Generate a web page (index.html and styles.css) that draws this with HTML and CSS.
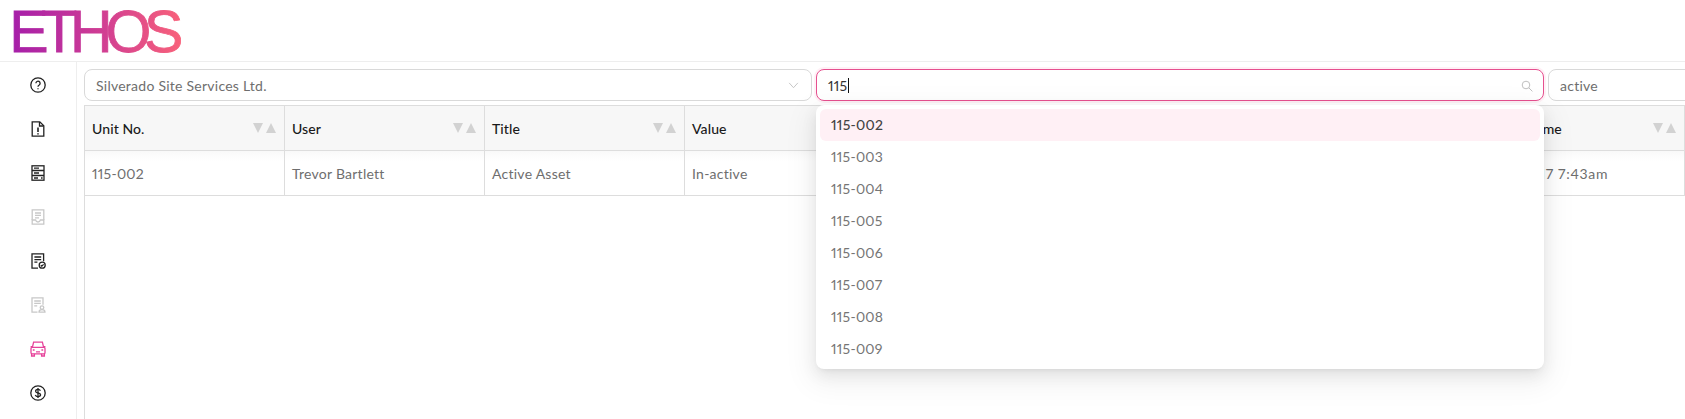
FILE: index.html
```html
<!DOCTYPE html>
<html lang="en">
<head>
<meta charset="utf-8">
<title>Ethos</title>
<link rel="stylesheet" href="styles.css">
</head>
<body>
<div class="page">
  <header class="topbar">
    <svg class="logo" viewBox="0 0 190 61" width="190" height="61">
      <defs>
        <linearGradient id="logoGrad" gradientUnits="userSpaceOnUse" x1="13" y1="0" x2="181" y2="0">
          <stop offset="0" stop-color="#a61fa9"/>
          <stop offset=".55" stop-color="#d23f92"/>
          <stop offset="1" stop-color="#f8617a"/>
        </linearGradient>
      </defs>
      <text class="logo-text" x="9.3" y="52">ETHOS</text>
    </svg>
  </header>
  <div class="shell">
    <nav class="sidebar">
      <a class="nav-item"><svg viewBox="0 0 16 16" class="ico"><circle cx="8" cy="8" r="7.2"/><path d="M5.9 6.2a2.1 2.1 0 1 1 3.3 1.8c-.8.5-1.2.9-1.2 1.8"/><path d="M8 11.3v1"/></svg></a>
      <a class="nav-item"><svg viewBox="0 0 16 16" class="ico"><path d="M2.2.8h7.6l4 4v10.4H2.2z"/><path d="M9.5 1v4h4"/><path d="M8 6.5v4.6M8 12.2v1.4" stroke-width="1.6"/></svg></a>
      <a class="nav-item"><svg viewBox="0 0 16 16" class="ico"><rect x="2" y=".8" width="12" height="14.4"/><path d="M2 5.500h12M2 10.500h12M4 3.200h5M4 8h5M4 13h4M11 13h1.600" /></svg></a>
      <a class="nav-item muted"><svg viewBox="0 0 16 16" class="ico"><path d="M2.2 11V.8h11.6V11"/><path d="M2.2 11v4.2h11.6V11h-3.4c-.4 1.4-1.2 2-2.4 2s-2-.6-2.4-2z"/><path d="M5 4h6M5 6.4h6M5 8.8h4"/></svg></a>
      <a class="nav-item"><svg viewBox="0 0 16 16" class="ico"><path d="M8 15.2H2V.8h11.6v7.4"/><path d="M4.4 4h6.8M4.4 6.6h6.8M4.4 9.2h3"/><circle cx="12.2" cy="12.2" r="3"/><path d="M10.8 12.2l1 1 1.8-1.8"/></svg></a>
      <a class="nav-item muted"><svg viewBox="0 0 16 16" class="ico"><path d="M7.5 15.2H2V.8h11v7"/><path d="M4.2 4h6.6M4.2 6.4h6.6M4.2 8.8h3"/><circle cx="12" cy="10.6" r="1.8"/><path d="M9 15.2c0-1.6 1.2-2.6 3-2.6s3 1 3 2.6z"/></svg></a>
      <a class="nav-item active"><svg viewBox="0 0 18 16" class="ico car"><path d="M3.4 6.400L4.600 1.200h8.800l1.200 5.200"/><path d="M1.600 5.600h2.200M14.200 5.600h2.200"/><rect x="2" y="6.400" width="14" height="6.400" rx="1"/><path d="M2.600 12.800v2.200h2.800v-2.200M12.600 12.800v2.200h2.800v-2.200M7 10.800h4M3.800 9h1.800M12.400 9h1.800"/></svg></a>
      <a class="nav-item"><svg viewBox="0 0 16 16" class="ico"><circle cx="8" cy="8" r="7.2"/><path d="M10.400 5.800C10 4.800 9.100 4.400 8 4.400c-1.400 0-2.400.7-2.400 1.800C5.600 8.800 10.600 7.200 10.600 9.800 10.600 11 9.500 11.600 8 11.600c-1.300 0-2.300-.6-2.700-1.600"/><path d="M8 3v10"/></svg></a>
    </nav>
    <main class="content">
      <div class="filters">
        <div class="field">
          <span class="field-text">Silverado Site Services Ltd.</span>
          <svg viewBox="0 0 12 8" class="chevron"><path d="M1 1l5 5.500L11 1"/></svg>
        </div>
        <div class="field field-focus">
          <span class="field-value">115</span><span class="caret"></span>
          <svg viewBox="0 0 12 12" class="search"><circle cx="5" cy="5" r="3.800"/><path d="M7.800 7.800L11.400 11.400"/></svg>
          <ul class="dropdown">
            <li class="option selected">115-002</li>
            <li class="option">115-003</li>
            <li class="option">115-004</li>
            <li class="option">115-005</li>
            <li class="option">115-006</li>
            <li class="option">115-007</li>
            <li class="option">115-008</li>
            <li class="option">115-009</li>
          </ul>
        </div>
        <div class="field"><span class="field-text">active</span></div>
      </div>
      <div class="table-wrap">
        <table class="grid">
          <thead>
            <tr>
              <th><div class="th-in"><span>Unit No.</span><span class="sort"><i class="down"></i><i class="up"></i></span></div></th>
              <th><div class="th-in"><span>User</span><span class="sort"><i class="down"></i><i class="up"></i></span></div></th>
              <th><div class="th-in"><span>Title</span><span class="sort"><i class="down"></i><i class="up"></i></span></div></th>
              <th><div class="th-in"><span>Value</span><span class="sort"><i class="down"></i><i class="up"></i></span></div></th>
              <th></th>
              <th></th>
              <th></th>
              <th><div class="th-in"><span>Event Time</span><span class="sort"><i class="down"></i><i class="up"></i></span></div></th>
            </tr>
          </thead>
          <tbody>
            <tr>
              <td>115-002</td>
              <td>Trevor Bartlett</td>
              <td>Active Asset</td>
              <td>In-active</td>
              <td></td>
              <td></td>
              <td></td>
              <td class="cell-date">23-05-17 7:43am</td>
            </tr>
          </tbody>
        </table>
      </div>
    </main>
  </div>
</div>
</body>
</html>
```

FILE: styles.css
```css
* { box-sizing: border-box; }
html, body { margin: 0; height: 100%; overflow: hidden; background: #fff; }
body { font-family: Lato, "Open Sans", sans-serif; font-size: 14px; color: #6e6e6e; letter-spacing: .25px; font-variant-numeric: proportional-nums; }
.page { height: 100vh; display: flex; flex-direction: column; overflow: hidden; }

.topbar { height: 62px; flex: none; border-bottom: 1px solid #eee; }
.logo { display: block; }
.logo-text {
  font-family: "Liberation Sans", Arial, sans-serif;
  font-size: 59px;
  letter-spacing: -7.3px;
  fill: url(#logoGrad);
  stroke: url(#logoGrad);
  stroke-width: .8px;
}

.shell { flex: 1; display: flex; min-height: 0; }
.sidebar { width: 77px; flex: none; border-right: 1px solid #eee; padding-top: 1px; display: flex; flex-direction: column; }
.nav-item { height: 44px; display: flex; align-items: center; justify-content: center; color: #222; }
.nav-item.muted { color: #c8c8c8; }
.nav-item.active { color: #e6439a; }
.ico { width: 16px; height: 16px; fill: none; stroke: currentColor; stroke-width: 1.3; }
.ico.car { width: 18px; height: 16px; }

.content { flex: 1; min-width: 0; padding: 7px 0 0 7px; display: flex; flex-direction: column; }
.filters { display: flex; gap: 4px; height: 32px; flex: none; margin-bottom: 4px; }
.field {
  position: relative;
  flex: none;
  width: 728px;
  height: 32px;
  border: 1px solid #d9d9d9;
  border-radius: 8px;
  padding: 0 11px;
  display: flex;
  align-items: center;
  background: #fff;
}
.field-focus { border-color: #e6508f; box-shadow: 0 0 0 2px #fff0f6; }
.field-value { color: #333; }
.caret { width: 1px; height: 15px; background: #111; margin-left: 1px; }
.chevron { position: absolute; right: 12px; top: 12px; width: 11px; height: 7px; fill: none; stroke: #bfbfbf; stroke-width: 1; }
.search { position: absolute; right: 10px; top: 10px; width: 12px; height: 12px; fill: none; stroke: #bfbfbf; stroke-width: 1; }

.dropdown {
  position: absolute;
  z-index: 5;
  top: 35px;
  left: -1px;
  right: -1px;
  margin: 0;
  padding: 4px;
  list-style: none;
  background: #fff;
  border-radius: 8px;
  box-shadow: 0 6px 16px 0 rgba(0,0,0,.08), 0 3px 6px -4px rgba(0,0,0,.12), 0 9px 28px 8px rgba(0,0,0,.05);
}
.option { height: 32px; line-height: 32px; padding: 0 11px; border-radius: 6px; color: #757575; }
.option.selected { background: #fff0f5; color: #444; font-weight: 500; }

.table-wrap { flex: 1; border-left: 1px solid #ddd; }
.grid { width: 1600px; table-layout: fixed; border-collapse: separate; border-spacing: 0; border-top: 1px solid #ddd; }
.grid th { height: 45px; padding: 0 8px 0 7px; background: #f7f7f7; border-right: 1px solid #ddd; border-bottom: 1px solid #ddd; color: #1a1a1a; font-weight: 500; text-align: left; letter-spacing: .1px; }
.grid td { height: 45px; padding: 0 7px; border-right: 1px solid #ddd; border-bottom: 1px solid #ddd; background: linear-gradient(#f9f9f9, #fff 10px); }
.grid td.cell-date { letter-spacing: .7px; }
.th-in { display: flex; align-items: center; justify-content: space-between; }
.sort { display: flex; gap: 3px; }
.sort i { display: block; width: 0; height: 0; border-left: 5.5px solid transparent; border-right: 5.5px solid transparent; }
.sort .down { border-top: 10px solid #d2d2d2; }
.sort .up { border-bottom: 10px solid #d2d2d2; }
```
